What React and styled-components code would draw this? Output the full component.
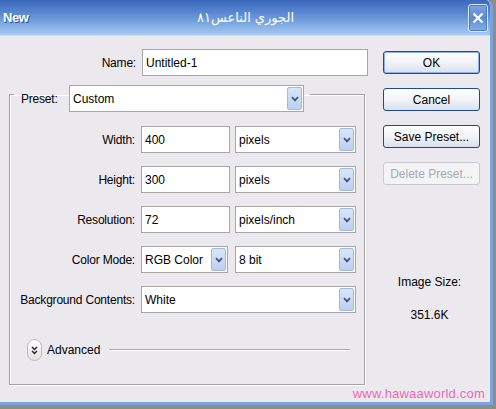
import React from "react";
import styled, { createGlobalStyle } from "styled-components";

const GlobalStyle = createGlobalStyle`
  html, body {
    margin: 0;
    padding: 0;
    background: #8c8c8c;
  }
  * {
    box-sizing: border-box;
  }
`;

const Window = styled.div`
  position: relative;
  width: 493px;
  height: 405px;
  display: flex;
  flex-direction: column;
  background: #ece9ee;
  border-right: 3px solid #7aa3de;
  border-bottom: 3px solid #7aa3de;
  border-top-right-radius: 7px;
  overflow: hidden;
  font-family: "Liberation Sans", Arial, sans-serif;
  font-size: 12px;
  color: #000;
`;

const TitleBar = styled.div`
  height: 36px;
  flex: none;
  display: grid;
  grid-template-columns: 1fr auto 1fr;
  align-items: center;
  padding: 0 2px 0 3px;
  background: linear-gradient(#3a69bd 0%, #5886cf 35%, #80aae2 70%, #a8c9f0 100%);
  border-bottom: 1px solid #c4daf5;
`;

const AppName = styled.span`
  font-weight: bold;
  font-size: 13px;
  letter-spacing: -0.4px;
  color: #fff;
  text-shadow: 1px 1px 0 #2a4f93;
`;

const Caption = styled.span`
  font-family: "DejaVu Sans", sans-serif;
  font-size: 13px;
  color: #fff;
  direction: rtl;
`;

const CloseButton = styled.div`
  justify-self: end;
  width: 20px;
  height: 28px;
  display: flex;
  align-items: center;
  justify-content: center;
  border: 1px solid #dce8fa;
  border-radius: 3px;
  background: linear-gradient(#7aa6e2, #5b8bd2 50%, #86afe6);
  box-shadow: inset 0 0 0 1px #4a78c2;
`;

const Client = styled.div`
  flex: 1;
  display: flex;
`;

const LeftPane = styled.div`
  width: 370px;
  padding-top: 13px;
`;

const Row = styled.div`
  display: grid;
  grid-template-columns: ${(p) => p.$label}px ${(p) => p.$field}px;
  column-gap: 6px;
  align-items: center;
  height: 27px;
`;

const Label = styled.span`
  text-align: right;
  white-space: nowrap;
  letter-spacing: -0.2px;
`;

const PresetLabel = styled(Label)`
  width: 43px;
  text-align: left;
`;

const Fields = styled.div`
  display: grid;
  grid-template-columns: ${(p) => p.$first}px 1fr;
  column-gap: ${(p) => p.$gap || 5}px;
  height: 27px;
`;

const Input = styled.div`
  height: 27px;
  display: flex;
  align-items: center;
  padding-left: 3px;
  background: #fff;
  border: 1px solid #a7a7a7;
`;

const SelectBox = styled.div`
  height: 27px;
  width: ${(p) => (p.$width ? `${p.$width}px` : "auto")};
  display: flex;
  align-items: center;
  padding: 1px;
  padding-left: 3px;
  background: #fff;
  border: 1px solid #a7a7a7;
`;

const SelectValue = styled.span`
  flex: 1;
  white-space: nowrap;
`;

const DropButton = styled.div`
  width: 15px;
  height: 100%;
  display: flex;
  align-items: center;
  justify-content: center;
  border: 1px solid #a5b9de;
  border-radius: 2px;
  background: linear-gradient(#d9e5f8, #bcd0f0);
`;

const GroupBox = styled.fieldset`
  width: 356px;
  margin: 1px 0 0 9px;
  padding: 14px 6px 23px 4px;
  border: 1px solid #a3a3a7;
  box-shadow: inset 1px 1px 0 #fff, 1px 1px 0 #fff;
  min-width: 0;
`;

const Legend = styled.legend`
  display: flex;
  align-items: center;
  gap: 5px;
  padding: 8px 6px 0 7px;
`;

const GroupRows = styled.div`
  display: flex;
  flex-direction: column;
  gap: 13px;
`;

const AdvancedRow = styled.div`
  display: flex;
  align-items: center;
  height: 22px;
  margin: 26px 8px 0 13px;
  gap: 5px;
`;

const ToggleIcon = styled.div`
  width: 15px;
  height: 22px;
  flex: none;
  display: flex;
  align-items: center;
  justify-content: center;
  border: 1px solid #b8b8b8;
  border-radius: 8px;
  background: linear-gradient(#ffffff, #e2e2e4);
`;

const Rule = styled.div`
  flex: 1;
  height: 2px;
  margin-left: 4px;
  border-top: 1px solid #a9a9ad;
  border-bottom: 1px solid #fff;
`;

const RightPane = styled.div`
  width: 97px;
  margin-left: 13px;
  padding-top: 15px;
  display: flex;
  flex-direction: column;
  gap: 14px;
`;

const Button = styled.div`
  height: 23px;
  display: flex;
  align-items: center;
  justify-content: center;
  border: 1px solid ${(p) => (p.$disabled ? "#c9c9cf" : "#1f4a8e")};
  border-radius: 3px;
  background: ${(p) =>
    p.$disabled ? "#f4f4f6" : "linear-gradient(#ffffff, #f1f3f8 50%, #d9e0ee)"};
  color: ${(p) => (p.$disabled ? "#a9a9ad" : "#000")};
  box-shadow: ${(p) => (p.$default ? "inset 0 0 0 1px #8fb1ea" : "none")};
  white-space: nowrap;
`;

const SizeInfo = styled.div`
  margin-top: 76px;
  display: flex;
  flex-direction: column;
  align-items: center;
  gap: 19px;
  padding-right: 4px;
`;

const Watermark = styled.div`
  position: absolute;
  right: 5px;
  bottom: 1px;
  font-size: 13px;
  letter-spacing: 0.2px;
  color: #f067b6;
`;

const Chevron = () => (
  <svg width="8" height="6" viewBox="0 0 8 6">
    <path d="M1 1.2 L4 4.4 L7 1.2" fill="none" stroke="#44587f" strokeWidth="1.8" />
  </svg>
);

const Select = ({ value, width }) => (
  <SelectBox $width={width}>
    <SelectValue>{value}</SelectValue>
    <DropButton>
      <Chevron />
    </DropButton>
  </SelectBox>
);

const rows = [
  { label: "Width:", value: "400", unit: "pixels" },
  { label: "Height:", value: "300", unit: "pixels" },
  { label: "Resolution:", value: "72", unit: "pixels/inch" },
];

const App = () => {
  return (
    <>
      <GlobalStyle />
      <Window>
        <TitleBar>
          <AppName>New</AppName>
          <Caption>الجوري الناعس٨١</Caption>
          <CloseButton>
            <svg width="12" height="12" viewBox="0 0 12 12">
              <path d="M1.5 1.5 L10.5 10.5 M10.5 1.5 L1.5 10.5" stroke="#fff" strokeWidth="2.2" />
            </svg>
          </CloseButton>
        </TitleBar>
        <Client>
          <LeftPane>
            <Row $label={136} $field={226}>
              <Label>Name:</Label>
              <Input>Untitled-1</Input>
            </Row>
            <GroupBox>
              <Legend>
                <PresetLabel>Preset:</PresetLabel>
                <Select value="Custom" width={235} />
              </Legend>
              <GroupRows>
                {rows.map((r) => (
                  <Row key={r.label} $label={121} $field={215}>
                    <Label>{r.label}</Label>
                    <Fields $first={89}>
                      <Input>{r.value}</Input>
                      <Select value={r.unit} />
                    </Fields>
                  </Row>
                ))}
                <Row $label={121} $field={215}>
                  <Label>Color Mode:</Label>
                  <Fields $first={87} $gap={7}>
                    <Select value="RGB Color" />
                    <Select value="8 bit" />
                  </Fields>
                </Row>
                <Row $label={121} $field={215}>
                  <Label>Background Contents:</Label>
                  <Select value="White" />
                </Row>
              </GroupRows>
              <AdvancedRow>
                <ToggleIcon>
                  <svg width="7" height="9" viewBox="0 0 7 9">
                    <path
                      d="M1 1 L3.5 3.6 L6 1 M1 5 L3.5 7.6 L6 5"
                      fill="none"
                      stroke="#222"
                      strokeWidth="1.4"
                    />
                  </svg>
                </ToggleIcon>
                <span>Advanced</span>
                <Rule />
              </AdvancedRow>
            </GroupBox>
          </LeftPane>
          <RightPane>
            <Button $default>OK</Button>
            <Button>Cancel</Button>
            <Button>Save Preset...</Button>
            <Button $disabled>Delete Preset...</Button>
            <SizeInfo>
              <span>Image Size:</span>
              <span>351.6K</span>
            </SizeInfo>
          </RightPane>
        </Client>
        <Watermark>www.hawaaworld.com</Watermark>
      </Window>
    </>
  );
};

export default App;
